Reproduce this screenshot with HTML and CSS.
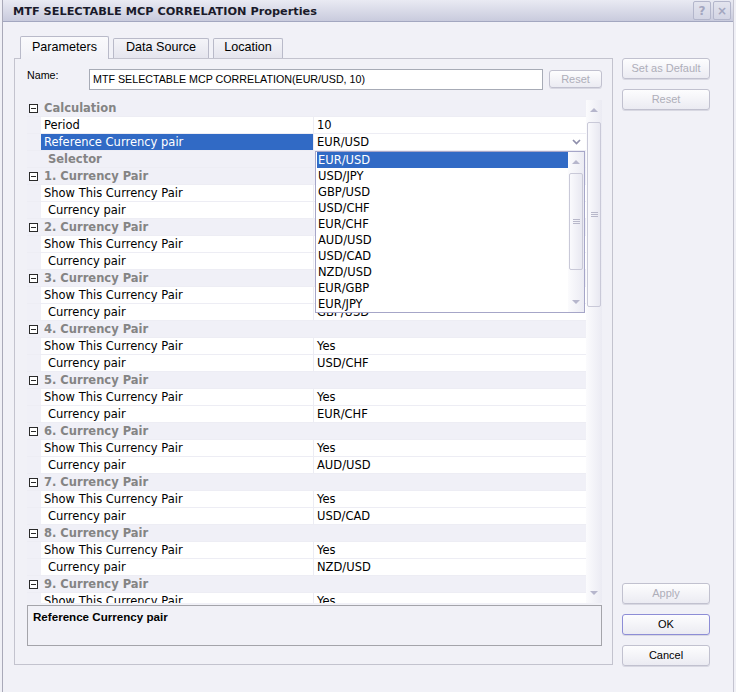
FILE: index.html
```html
<!DOCTYPE html>
<html>
  <head>
    <title>MTF SELECTABLE MCP CORRELATION Properties</title>
    <link rel="stylesheet" href="styles.css">
  </head>
  <body>
    <div class="window">
      <div class="titlebar">
        <div class="title">MTF SELECTABLE MCP CORRELATION Properties</div>
        <div class="title-btn">?</div>
        <div class="title-btn">&#215;</div>
      </div>

      <div class="main">
        <div class="tabs-area">
          <div class="tabs">
            <div class="tab active">Parameters</div>
            <div class="tab tab-data">Data Source</div>
            <div class="tab tab-loc">Location</div>
          </div>

          <div class="panel">
            <div class="name-row">
              <div class="name-label">Name:</div>
              <div class="name-input">MTF SELECTABLE MCP CORRELATION(EUR/USD, 10)</div>
              <div class="btn disabled btn-small">Reset</div>
            </div>

            <div class="grid">
              <div class="rows">
                <div class="row cat"><span class="toggle"></span><span class="cat-name">Calculation</span></div>
                <div class="row"><span class="name">Period</span><span class="value">10</span></div>
                <div class="row selected"><span class="name">Reference Currency pair</span><span class="value edit">EUR/USD<span class="drop-btn"><svg width="9" height="6" viewBox="0 0 9 6"><path d="M1 1 L4.5 4.5 L8 1" fill="none" stroke="#8e8eab" stroke-width="1.7"/></svg></span></span></div>
                <div class="row cat"><span class="cat-name plain">Selector</span></div>

                <div class="row cat"><span class="toggle"></span><span class="cat-name">1. Currency Pair</span></div>
                <div class="row"><span class="name">Show This Currency Pair</span><span class="value">Yes</span></div>
                <div class="row"><span class="name child">Currency pair</span><span class="value">EUR/USD</span></div>

                <div class="row cat"><span class="toggle"></span><span class="cat-name">2. Currency Pair</span></div>
                <div class="row"><span class="name">Show This Currency Pair</span><span class="value">Yes</span></div>
                <div class="row"><span class="name child">Currency pair</span><span class="value">USD/JPY</span></div>

                <div class="row cat"><span class="toggle"></span><span class="cat-name">3. Currency Pair</span></div>
                <div class="row"><span class="name">Show This Currency Pair</span><span class="value">Yes</span></div>
                <div class="row"><span class="name child">Currency pair</span><span class="value">GBP/USD</span></div>

                <div class="row cat"><span class="toggle"></span><span class="cat-name">4. Currency Pair</span></div>
                <div class="row"><span class="name">Show This Currency Pair</span><span class="value">Yes</span></div>
                <div class="row"><span class="name child">Currency pair</span><span class="value">USD/CHF</span></div>

                <div class="row cat"><span class="toggle"></span><span class="cat-name">5. Currency Pair</span></div>
                <div class="row"><span class="name">Show This Currency Pair</span><span class="value">Yes</span></div>
                <div class="row"><span class="name child">Currency pair</span><span class="value">EUR/CHF</span></div>

                <div class="row cat"><span class="toggle"></span><span class="cat-name">6. Currency Pair</span></div>
                <div class="row"><span class="name">Show This Currency Pair</span><span class="value">Yes</span></div>
                <div class="row"><span class="name child">Currency pair</span><span class="value">AUD/USD</span></div>

                <div class="row cat"><span class="toggle"></span><span class="cat-name">7. Currency Pair</span></div>
                <div class="row"><span class="name">Show This Currency Pair</span><span class="value">Yes</span></div>
                <div class="row"><span class="name child">Currency pair</span><span class="value">USD/CAD</span></div>

                <div class="row cat"><span class="toggle"></span><span class="cat-name">8. Currency Pair</span></div>
                <div class="row"><span class="name">Show This Currency Pair</span><span class="value">Yes</span></div>
                <div class="row"><span class="name child">Currency pair</span><span class="value">NZD/USD</span></div>

                <div class="row cat"><span class="toggle"></span><span class="cat-name">9. Currency Pair</span></div>
                <div class="row"><span class="name">Show This Currency Pair</span><span class="value">Yes</span></div>
                <div class="row"><span class="name child">Currency pair</span><span class="value">EUR/GBP</span></div>
              </div>

              <div class="vscroll">
                <div class="arrow-box"><span class="arrow-up"></span></div>
                <div class="thumb main-thumb"><span class="grip"></span></div>
                <div class="arrow-box bottom"><span class="arrow-down"></span></div>
              </div>

              <!-- open list of the reference pair -->
              <div class="dropdown">
                <div class="options">
                  <div class="option current">EUR/USD</div>
                  <div class="option">USD/JPY</div>
                  <div class="option">GBP/USD</div>
                  <div class="option">USD/CHF</div>
                  <div class="option">EUR/CHF</div>
                  <div class="option">AUD/USD</div>
                  <div class="option">USD/CAD</div>
                  <div class="option">NZD/USD</div>
                  <div class="option">EUR/GBP</div>
                  <div class="option">EUR/JPY</div>
                </div>
                <div class="lscroll">
                  <div class="arrow-box"><span class="arrow-up"></span></div>
                  <div class="thumb list-thumb"><span class="grip"></span></div>
                  <div class="arrow-box bottom"><span class="arrow-down"></span></div>
                </div>
              </div>
            </div>

            <div class="desc">Reference Currency pair</div>
          </div>
        </div>

        <div class="side">
          <div class="btn disabled">Set as Default</div>
          <div class="btn disabled btn-gap">Reset</div>
          <div class="btn disabled btn-apply">Apply</div>
          <div class="btn btn-ok btn-gap">OK</div>
          <div class="btn btn-gap">Cancel</div>
        </div>
      </div>
    </div>
  </body>
</html>
```

FILE: styles.css
```css
*{
  box-sizing: border-box;
}
body{
  margin: 0;
  background-color: #f0f0f6;
  font-family: "Liberation Sans", Arial, sans-serif;
  font-size: 11px;
  color: #000;
}
.window{
  width: 732px;
  height: 692px;
  margin-left: 2px;
  border-left: 1px solid #a9a9b8;
  border-right: 1px solid #c4c4d0;
  background-color: #f1f1f7;
}

/* title bar */
.titlebar{
  height: 22px;
  display: flex;
  align-items: flex-start;
  padding: 0 2px 0 10px;
  background: linear-gradient(#e9eaf3, #c9cbdd);
  border-bottom: 1px solid #a3a7c0;
}
.title{
  flex: 1;
  padding-top: 5px;
  font-family: "DejaVu Sans", Verdana, sans-serif;
  font-weight: bold;
  font-size: 11.3px;
  color: #1a1a2a;
}
.title-btn{
  width: 18px;
  height: 19px;
  margin-left: 2px;
  margin-top: 1px;
  border: 1px solid #b3b6cb;
  border-radius: 2px;
  background: linear-gradient(#e3e4ee, #d3d5e4);
  display: flex;
  align-items: center;
  justify-content: center;
  font-family: "DejaVu Sans", sans-serif;
  font-weight: bold;
  font-size: 12px;
  color: #a3a6bf;
}

.main{
  display: flex;
  padding: 14px 0 0 11px;
}

/* tabs */
.tabs-area{
  width: 599px;
}
.tabs{
  display: flex;
  align-items: flex-end;
  height: 22px;
  padding-left: 6px;
  gap: 4px;
}
.tab{
  width: 89px;
  height: 20px;
  border: 1px solid #b9bac9;
  border-bottom: none;
  border-radius: 2px 2px 0 0;
  background: linear-gradient(#f4f4f8, #e5e5ee);
  font-size: 12.6px;
  line-height: 16px;
  text-align: center;
}
.tab.active{
  height: 23px;
  margin-bottom: -1px;
  padding-top: 2px;
  background: linear-gradient(#fafafc, #f1f1f7);
  position: relative;
}
.tab-data{
  width: 96px;
}
.tab-loc{
  width: 70px;
}
.panel{
  height: 607px;
  border: 1px solid #c3c3ce;
  padding: 10px 10px 0 12px;
  display: flex;
  flex-direction: column;
}

/* name row */
.name-row{
  display: flex;
  height: 21px;
}
.name-label{
  width: 62px;
  font-size: 10.7px;
  line-height: 13px;
}
.name-input{
  width: 454px;
  height: 21px;
  border: 1px solid #a7abb6;
  background-color: #fff;
  padding-left: 3px;
  font-size: 10.7px;
  line-height: 19px;
  white-space: nowrap;
}

/* buttons */
.btn{
  height: 21px;
  border: 1px solid #c1c1cf;
  border-radius: 3px;
  background: linear-gradient(#fdfdfe, #ebebf2);
  box-shadow: 0 1px 0 #d8d8e2;
  text-align: center;
  font-size: 11px;
  line-height: 19px;
  color: #000;
}
.btn.disabled{
  color: #aeaeb9;
}
.btn-small{
  width: 53px;
  height: 18px;
  margin: 1px 0 0 6px;
  line-height: 16px;
}
.btn-ok{
  border-color: #8d8dd6;
}
.side{
  width: 88px;
  height: 630px;
  margin-left: 9px;
  padding-top: 22px;
  display: flex;
  flex-direction: column;
}
.btn-gap{
  margin-top: 10px;
}
.btn-apply{
  margin-top: auto;
}

/* property grid */
.grid{
  position: relative;
  display: flex;
  height: 503px;
  margin-top: 10px;
  background-color: #f0f0f7;
}
.rows{
  width: 559px;
  overflow: hidden;
  font-family: "DejaVu Sans", Verdana, sans-serif;
  font-size: 11.5px;
}
.row{
  display: flex;
  height: 17px;
  padding-left: 14px;
  border-bottom: 1px solid #ededf4;
  line-height: 16px;
  white-space: nowrap;
}
.name{
  width: 273px;
  padding-left: 3px;
  background-color: #fff;
  border-right: 1px solid #ececf3;
}
.name.child{
  padding-left: 7px;
}
.value{
  flex: 1;
  padding-left: 3px;
  background-color: #fff;
}
.selected .name{
  background-color: #316ac5;
  color: #fff;
}
.value.edit{
  display: flex;
  justify-content: space-between;
}
.drop-btn{
  width: 20px;
  display: flex;
  align-items: center;
  justify-content: center;
}
.row.cat{
  padding-left: 2px;
  align-items: center;
}
.toggle{
  width: 9px;
  height: 9px;
  border: 1px solid #2a2a2a;
  background-color: #fff;
  position: relative;
}
.toggle::after{
  content: "";
  position: absolute;
  left: 1px;
  top: 3px;
  width: 5px;
  height: 1px;
  background-color: #2a2a2a;
}
.cat-name{
  margin-left: 6px;
  font-weight: bold;
  color: #848484;
}
.cat-name.plain{
  margin-left: 19px;
}

/* scrollbars */
.vscroll,
.lscroll{
  width: 16px;
  display: flex;
  flex-direction: column;
  align-items: center;
  background: linear-gradient(to right, #fbfbfd, #ebebf3);
}
.arrow-box{
  height: 20px;
  width: 100%;
  display: flex;
  align-items: center;
  justify-content: center;
}
.arrow-box.bottom{
  margin-top: auto;
}
.arrow-up{
  border-left: 4px solid transparent;
  border-right: 4px solid transparent;
  border-bottom: 4px solid #b6b6cc;
}
.arrow-down{
  border-left: 4px solid transparent;
  border-right: 4px solid transparent;
  border-top: 4px solid #b6b6cc;
}
.thumb{
  width: 14px;
  border: 1px solid #c9c9d8;
  border-radius: 2px;
  background: linear-gradient(to right, #fafafd, #e8e8f1);
  display: flex;
  align-items: center;
  justify-content: center;
}
.main-thumb{
  margin-top: 2px;
  height: 185px;
}
.list-thumb{
  margin-top: 1px;
  height: 97px;
}
.grip{
  width: 7px;
  height: 5px;
  border-top: 1px solid #b8b8ca;
  border-bottom: 1px solid #b8b8ca;
  position: relative;
}
.grip::after{
  content: "";
  position: absolute;
  left: 0;
  top: 1px;
  width: 7px;
  height: 1px;
  background-color: #b8b8ca;
}

/* open drop-down list */
.dropdown{
  position: absolute;
  left: 288px;
  top: 51px;
  width: 270px;
  height: 162px;
  border: 1px solid #a6a6c8;
  background-color: #fff;
  display: flex;
  font-family: "DejaVu Sans", Verdana, sans-serif;
  font-size: 11.5px;
}
.options{
  width: 252px;
  padding-left: 1px;
}
.option{
  height: 16px;
  line-height: 16px;
  padding-left: 1px;
}
.option.current{
  background-color: #316ac5;
  color: #fff;
}

/* description */
.desc{
  margin-top: 2px;
  height: 41px;
  border: 1px solid #a4a4aa;
  padding: 3px 5px;
  font-weight: bold;
  font-size: 11.6px;
  line-height: 16px;
}
```
